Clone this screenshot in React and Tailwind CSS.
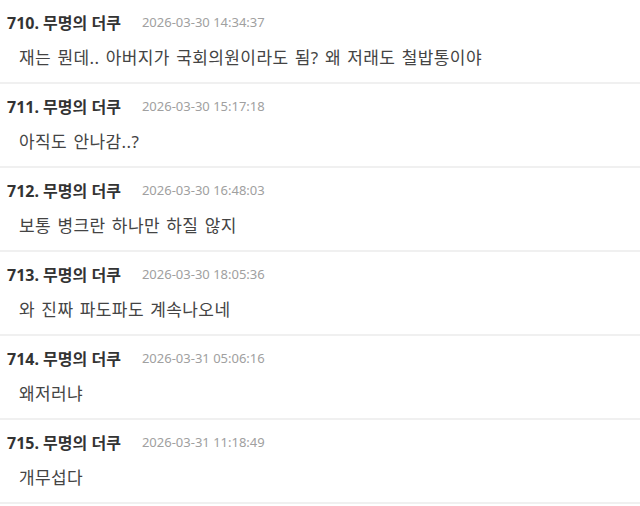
import React from 'react';

const comments = [
    { no: 710, date: '2026-03-30 14:34:37', text: '재는 뭔데.. 아버지가 국회의원이라도 됨? 왜 저래도 철밥통이야' },
    { no: 711, date: '2026-03-30 15:17:18', text: '아직도 안나감..?' },
    { no: 712, date: '2026-03-30 16:48:03', text: '보통 병크란 하나만 하질 않지' },
    { no: 713, date: '2026-03-30 18:05:36', text: '와 진짜 파도파도 계속나오네' },
    { no: 714, date: '2026-03-31 05:06:16', text: '왜저러냐' },
    { no: 715, date: '2026-03-31 11:18:49', text: '개무섭다' },
];

const Comment = ({ no, date, text }) => (
    <div className="h-[84px] border-b-2 border-[#f0f0f0] pt-[13px]">
        <div className="flex items-center h-5 pl-[7px]">
            <span className="text-[16px] font-bold text-[#333]">
                {no}. 무명의 더쿠
            </span>
            <span className="ml-[21px] text-[13px] text-[#a0a0a0]">{date}</span>
        </div>
        <p className="mt-[13px] h-6 leading-6 pl-[19px] text-[17px] tracking-[0.4px] [word-spacing:1.5px] text-[#444]">
            {text}
        </p>
    </div>
);

export default function App() {
    return (
        <div
            className="w-[640px] h-[506px] overflow-hidden bg-white"
            style={{ fontFamily: '"Noto Sans", "Noto Sans CJK KR", sans-serif' }}
        >
            {comments.map((c) => (
                <Comment key={c.no} {...c} />
            ))}
        </div>
    );
}
